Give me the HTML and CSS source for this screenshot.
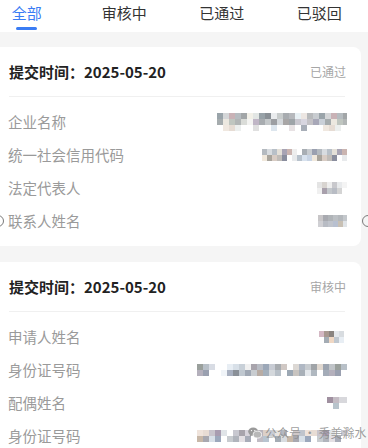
FILE: index.html
```html
<!DOCTYPE html>
<html lang="zh-CN">
<head>
<meta charset="utf-8">
<title>申请列表</title>
<link rel="stylesheet" href="styles.css">
</head>
<body>
<div class="tabs">
  <div class="tab active"><span>全部</span><i class="bar"></i></div>
  <div class="tab"><span>审核中</span></div>
  <div class="tab"><span>已通过</span></div>
  <div class="tab"><span>已驳回</span></div>
</div>

<div class="list">
  <div class="card">
    <div class="card-head">
      <span class="title">提交时间：2025-05-20</span>
      <span class="status">已通过</span>
    </div>
    <div class="card-body">
      <div class="row"><span class="label">企业名称</span><span class="mz mz-long3"></span></div>
      <div class="row"><span class="label">统一社会信用代码</span><span class="mz mz-mid"></span></div>
      <div class="row"><span class="label">法定代表人</span><span class="mz mz-short"></span></div>
      <div class="row"><span class="label">联系人姓名</span><span class="mz mz-short2"></span></div>
    </div>
  </div>

  <div class="card">
    <div class="card-head">
      <span class="title">提交时间：2025-05-20</span>
      <span class="status">审核中</span>
    </div>
    <div class="card-body">
      <div class="row"><span class="label">申请人姓名</span><span class="mz mz-short3"></span></div>
      <div class="row"><span class="label">身份证号码</span><span class="mz mz-id"></span></div>
      <div class="row"><span class="label">配偶姓名</span><span class="mz mz-short4"></span></div>
      <div class="row"><span class="label">身份证号码</span><span class="mz mz-id2"></span></div>
    </div>
  </div>
</div>

<i class="notch notch-l"></i>
<i class="notch notch-r"></i>

<div class="watermark">
  <svg class="wx" width="14" height="12" viewBox="0 0 14 12">
    <ellipse cx="5.2" cy="4.6" rx="5" ry="4.2" fill="#9a9a9a"/>
    <path d="M2.2 7.6 L1.6 9.8 L4 8.5 Z" fill="#9a9a9a"/>
    <ellipse cx="9.4" cy="7.6" rx="4.2" ry="3.5" fill="#b8b8b8" stroke="#fff" stroke-width="0.8"/>
    <circle cx="3.5" cy="3.6" r="0.7" fill="#fff"/>
    <circle cx="6.8" cy="3.6" r="0.7" fill="#fff"/>
  </svg>
  <span>公众号 · 秀美滁水</span>
</div>
</body>
</html>
```

FILE: styles.css
```css
html, body {
  margin: 0;
  padding: 0;
}
body {
  width: 368px;
  height: 448px;
  overflow: hidden;
  position: relative;
  background: #f5f5f5;
  font-family: "Noto Sans CJK SC", "Noto Sans", sans-serif;
}

.tabs {
  height: 32px;
  background: #fff;
  display: flex;
  margin-left: -22px;
}
.tab {
  width: 100px;
  display: flex;
  flex-direction: column;
  align-items: center;
  padding-top: 2px;
  font-size: 15px;
  line-height: 22px;
  color: #333;
}
.tab.active {
  color: #3a7cf4;
}
.tab .bar {
  display: block;
  width: 21px;
  height: 3px;
  margin-top: 3px;
  border-radius: 2px;
  background: #3a7cf4;
}

.list {
  display: flex;
  flex-direction: column;
  gap: 16px;
  padding: 15px 7px 0 0;
}
.card {
  margin-left: -8px;
  background: #fff;
  border-radius: 8px;
  padding: 0 16px 0 17px;
}
.card-head {
  height: 49px;
  border-bottom: 1px solid #f0f0f0;
  display: flex;
  align-items: center;
  justify-content: space-between;
}
.title {
  font-size: 15px;
  font-weight: 700;
  color: #222;
}
.status {
  font-size: 12px;
  color: #a6a6a6;
  margin-right: -1px;
}
.card-body {
  padding: 8px 0 9px;
}
.row {
  height: 33px;
  display: flex;
  align-items: center;
  justify-content: space-between;
}
.label {
  font-size: 14.5px;
  color: #9a9a9a;
  margin-left: -1px;
}

/* mosaic-blurred values */
.mz {
  display: block;
  height: 12px;
  margin-right: -2px;
  background-repeat: no-repeat;
  background-size: 100% 6px;
  background-position: 0 0, 0 6px;
}
.mz-long3 {
  width: 130px;
  height: 18px;
  background-position: 0 0, 0 6px, 0 12px;
  background-image:
    repeating-linear-gradient(90deg, #9aa4aa 0 6px, #d4d6d8 6px 12px, #c9b2b6 12px 18px, #b6bcc0 18px 24px, #a2a6a8 24px 30px, #f2f0e8 30px 36px, #e2e6e4 36px 42px, #98a2a8 42px 48px, #8a9096 48px 54px, #eaecee 54px 60px, #c8cccc 60px 66px, #a8acb0 66px 72px, #b6b8bc 72px 78px, #e8f0f4 78px 84px, #ece6e2 84px 90px, #b8babc 90px 96px, #c8ccd0 96px 102px),
    repeating-linear-gradient(90deg, #a6acae 0 6px, #ece8e0 6px 12px, #c0c6c0 12px 18px, #b2b6b6 18px 24px, #dadcd8 24px 30px, #f4f4f2 30px 36px, #c0b6c6 36px 42px, #a8acb0 42px 48px, #c4c8ca 48px 54px, #9c9ea2 54px 60px, #d4d8dc 60px 66px, #a8a6a6 66px 72px, #9ea4a8 72px 78px, #cac8d0 78px 84px, #d8d6e0 84px 90px, #c4c2c6 90px 96px, #a8a8b8 96px 102px, #cad0d8 102px 108px),
    repeating-linear-gradient(90deg, #ffffff 0 6px, #f0e8e0 6px 12px, #e6dcd4 12px 18px, #ecefee 18px 24px, #ffffff 24px 36px, #e0e0e0 36px 42px, #ffffff 42px 54px, #dde6ee 54px 60px, #ffffff 60px 72px, #e8e2e4 72px 78px, #ffffff 78px 84px, #a8aeb8 84px 90px, #ffffff 90px 100px);
}
.mz-mid {
  width: 85px;
  background-image:
    repeating-linear-gradient(90deg, #b4bac0 0 5px, #d8dce0 5px 10px, #b8c0c8 10px 15px, #e4e0d8 15px 20px, #a8a4b4 20px 25px, #cab4b0 25px 30px, #eeeeee 30px 35px, #ffffff 35px 40px, #a8aeb4 40px 45px, #c8ccd0 45px 50px, #9aa0b0 50px 55px),
    repeating-linear-gradient(90deg, #f0e8dc 0 5px, #a8a49c 5px 10px, #d8ccc4 10px 15px, #c0bcb8 15px 20px, #8a8e9e 20px 25px, #ffffff 25px 30px, #e8eaec 30px 35px, #b8c2cc 35px 40px, #d8e2ee 40px 45px, #c8d4e4 45px 50px);
}
.mz-short {
  width: 30px;
  background-image:
    repeating-linear-gradient(90deg, #e4e4e4 0 5px, #d8d4d0 5px 10px, #eeeeee 10px 15px, #c8c8cc 15px 20px, #e8eaec 20px 25px, #f4f4f4 25px 30px),
    repeating-linear-gradient(90deg, #f0f0f0 0 5px, #a8a0ac 5px 10px, #c4c8cc 10px 15px, #b8bcc4 15px 20px, #d4d4d4 20px 25px, #ffffff 25px 30px);
}
.mz-short2 {
  width: 29px;
  background-image:
    repeating-linear-gradient(90deg, #c8c6c8 0 5px, #a8aab0 5px 10px, #b0b4b8 10px 15px, #bcc0c4 15px 20px, #b4b8bc 20px 25px, #c4c8cc 25px 30px),
    repeating-linear-gradient(90deg, #d0d0d4 0 5px, #b8bcc4 5px 10px, #c0c4cc 10px 15px, #b8c0d0 15px 20px, #c8c0b4 20px 25px, #e0e4e8 25px 30px);
}
.mz-short3 {
  width: 28px;
  background-image:
    repeating-linear-gradient(90deg, #d4b8c4 0 5px, #a89890 5px 10px, #8a8480 10px 15px, #e4e8ec 15px 20px, #d8dce0 20px 25px, #ffffff 25px 30px),
    repeating-linear-gradient(90deg, #ffffff 0 5px, #a4acb4 5px 10px, #f0d8c4 10px 15px, #c0c8d0 15px 20px, #e8eef4 20px 25px, #ffffff 25px 30px);
}
.mz-id {
  width: 150px;
  background-image:
    repeating-linear-gradient(90deg, #9aa09c 0 6px, #b8c0c8 6px 12px, #d8dce4 12px 18px, #ffffff 18px 30px, #e8eef4 30px 36px, #d8e0e8 36px 42px, #c8d0d8 42px 48px, #f0f0f0 48px 54px, #a8a4ac 54px 60px, #b8bcc4 60px 66px, #9ca8b8 66px 72px, #c8ccd4 72px 78px, #a8acb0 78px 84px, #d0c8c4 84px 90px, #ffffff 90px 96px, #dcd8d4 96px 102px, #b0b8c4 102px 108px, #c8ccd0 108px 114px, #a0a4a8 114px 120px, #e0d8d0 120px 126px, #9ca4b0 126px 132px, #c0c4c8 132px 138px),
    repeating-linear-gradient(90deg, #b4b0bc 0 6px, #9aa0b0 6px 12px, #ffffff 12px 24px, #f0f4f8 24px 30px, #a8b0c0 30px 36px, #8a9098 36px 42px, #c0c8d0 42px 48px, #a0a8b4 48px 54px, #c8ccd0 54px 60px, #b8aca4 60px 66px, #a4b0bc 66px 72px, #d4d8dc 72px 78px, #b8c0c8 78px 84px, #ffffff 84px 90px, #9ca8b4 90px 96px, #c8c4c0 96px 102px, #a8b0b8 102px 108px, #e4e8ec 108px 114px, #b0b8c0 114px 120px, #ffffff 120px 126px, #a4acb8 126px 132px);
}
.mz-short4 {
  width: 24px;
  background-image:
    repeating-linear-gradient(90deg, #ffffff 0 4px, #a090a0 4px 10px, #c4bcc4 10px 16px, #d8d8dc 16px 24px),
    repeating-linear-gradient(90deg, #ffffff 0 10px, #b8c4cc 10px 16px, #ffffff 16px 24px);
}
.mz-id2 {
  width: 150px;
  background-image:
    repeating-linear-gradient(90deg, #f0e4dc 0 6px, #e8dcd4 6px 12px, #c8c4cc 12px 18px, #a89cb0 18px 24px, #e0e4e8 24px 30px, #ffffff 30px 36px, #c8c8d0 36px 42px, #a8a4ac 42px 48px, #d8d4dc 48px 54px, #ffffff 54px 60px, #b8b4bc 60px 66px, #dcd0c8 66px 72px, #c8ccd4 72px 78px, #e8e4e0 78px 84px, #b4b8c0 84px 90px, #ffffff 90px 96px, #d0c8c8 96px 102px, #c0c4cc 102px 108px),
    repeating-linear-gradient(90deg, #c8b8a8 0 6px, #a8a8b0 6px 12px, #d8e0e8 12px 18px, #9ca8bc 18px 24px, #ffffff 24px 30px, #c8ccd0 30px 36px, #b0b4bc 36px 42px, #e4e0e4 42px 48px, #a8acb8 48px 54px, #ffffff 54px 60px, #c0bcc4 60px 66px, #b8c4d0 66px 72px, #ffffff 72px 78px, #a4acb4 78px 84px, #d8dce0 84px 90px);
}

/* edge notches */
.notch {
  position: absolute;
  top: 215px;
  width: 10px;
  height: 10px;
  border: 1px solid #7a7a7a;
  border-radius: 50%;
  background: transparent;
}
.notch-l { left: -8px; }
.notch-r { left: 362px; }

/* watermark overlay */
.watermark {
  position: absolute;
  left: 248px;
  top: 424px;
  display: flex;
  align-items: center;
  gap: 3px;
  font-size: 12px;
  color: rgba(140, 140, 140, 0.85);
  white-space: nowrap;
}
.wx { display: block; }
```
